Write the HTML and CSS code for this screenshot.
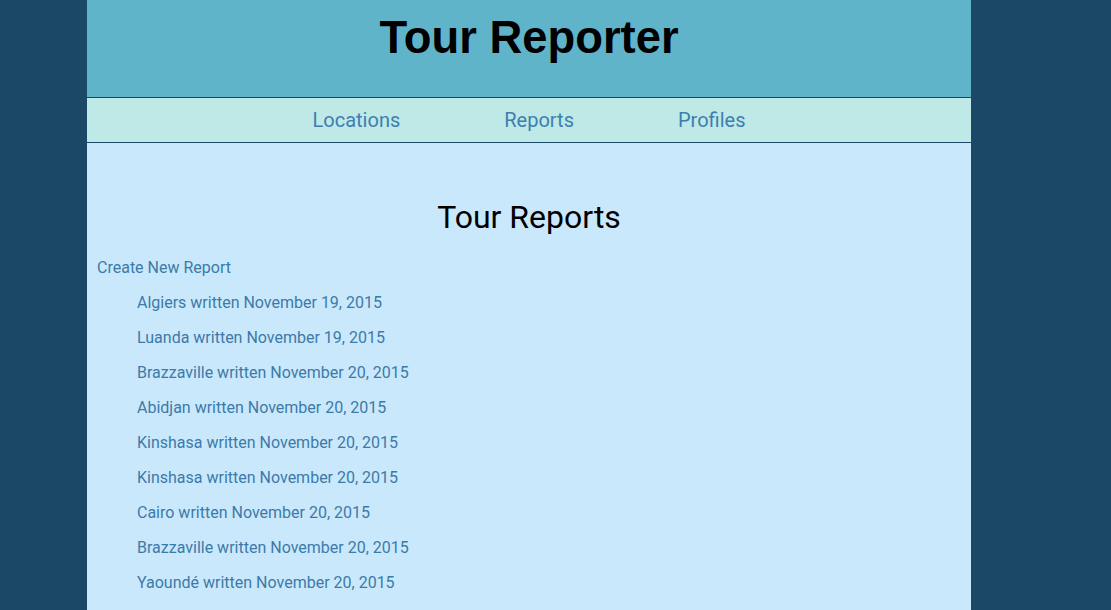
FILE: index.html
```html
<!DOCTYPE html>
<html lang="en">
<head>
<meta charset="utf-8">
<title>Tour Reporter</title>
<link rel="stylesheet" href="styles.css">
</head>
<body>
<div class="page">
  <header class="site-header">
    <h1 class="site-title">Tour Reporter</h1>
  </header>
  <nav class="site-nav">
    <a href="#" class="nav-link">Locations</a>
    <a href="#" class="nav-link">Reports</a>
    <a href="#" class="nav-link">Profiles</a>
  </nav>
  <main class="content">
    <h2 class="page-title">Tour Reports</h2>
    <a href="#" class="create-link">Create New Report</a>
    <ul class="report-list">
      <li><a href="#">Algiers written November 19, 2015</a></li>
      <li><a href="#">Luanda written November 19, 2015</a></li>
      <li><a href="#">Brazzaville written November 20, 2015</a></li>
      <li><a href="#">Abidjan written November 20, 2015</a></li>
      <li><a href="#">Kinshasa written November 20, 2015</a></li>
      <li><a href="#">Kinshasa written November 20, 2015</a></li>
      <li><a href="#">Cairo written November 20, 2015</a></li>
      <li><a href="#">Brazzaville written November 20, 2015</a></li>
      <li><a href="#">Yaoundé written November 20, 2015</a></li>
    </ul>
  </main>
</div>
</body>
</html>
```
FILE: styles.css
```css
html, body {
  margin: 0;
  padding: 0;
  background: #1b4866;
  font-family: Roboto, "Liberation Sans", Arial, sans-serif;
}

.page {
  margin-left: 87px;
  width: 884px;
  min-height: 610px;
  background: #cae8fc;
}

.site-header {
  background: #60b4ca;
  height: 98px;
  border-bottom: 1px solid #1b4866;
  box-sizing: border-box;
  display: flex;
  justify-content: center;
}

.site-title {
  margin: 0;
  padding-top: 12px;
  font-family: "Liberation Sans", Arial, sans-serif;
  font-weight: bold;
  font-size: 45.4px;
  line-height: 52px;
  color: #000;
}

.site-nav {
  background: #bee9e7;
  height: 45px;
  border-bottom: 1px solid #1b4866;
  box-sizing: border-box;
  display: flex;
  justify-content: center;
  align-items: center;
  gap: 104px;
}

.nav-link {
  font-size: 20px;
  line-height: 24px;
  color: #3d7fb0;
  text-decoration: none;
}

.content {
  padding: 54px 10px 20px;
}

.page-title {
  margin: 0 0 21px;
  text-align: center;
  font-weight: normal;
  font-size: 32px;
  line-height: 40px;
  color: #000;
}

.create-link {
  display: block;
  font-size: 16px;
  line-height: 20px;
  color: #3c7aa8;
  text-decoration: none;
}

.report-list {
  list-style: none;
  margin: 0;
  padding: 15px 0 0 40px;
  display: flex;
  flex-direction: column;
  gap: 15px;
}

.report-list li {
  font-size: 16px;
  line-height: 20px;
}

.report-list a {
  color: #3c7aa8;
  text-decoration: none;
}
```
